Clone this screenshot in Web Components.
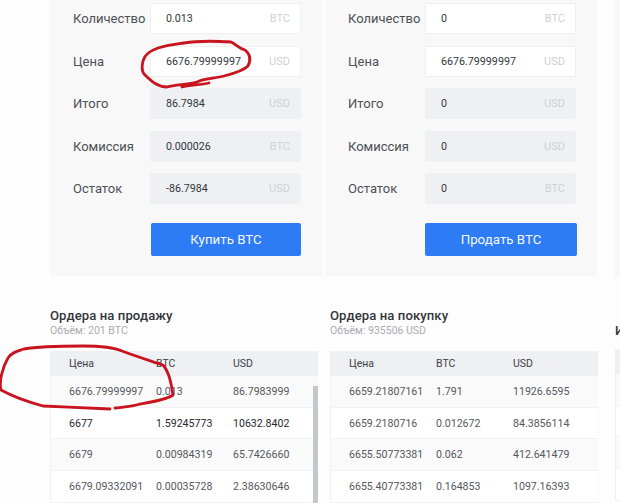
<!doctype html>
<html>
<head>
<meta charset="utf-8">
<style>
html, body { margin: 0; padding: 0; height: 503px; overflow: hidden; background: #fdfdfd; }
body { font-family: Roboto, "Liberation Sans", sans-serif; color: #3a3d42; }
</style>
</head>
<body>
<trade-page>
	<trade-form slot="forms" action="Купить BTC" class="first">
		<trade-field label="Количество" unit="BTC" value="0.013" editable></trade-field>
		<trade-field label="Цена" unit="USD" value="6676.79999997" editable></trade-field>
		<trade-field label="Итого" unit="USD" value="86.7984"></trade-field>
		<trade-field label="Комиссия" unit="BTC" value="0.000026"></trade-field>
		<trade-field label="Остаток" unit="USD" value="-86.7984"></trade-field>
	</trade-form>
	<trade-form slot="forms" action="Продать BTC">
		<trade-field label="Количество" unit="BTC" value="0" editable></trade-field>
		<trade-field label="Цена" unit="USD" value="6676.79999997" editable></trade-field>
		<trade-field label="Итого" unit="USD" value="0"></trade-field>
		<trade-field label="Комиссия" unit="USD" value="0"></trade-field>
		<trade-field label="Остаток" unit="BTC" value="0"></trade-field>
	</trade-form>
	<trade-form slot="forms" class="stub"></trade-form>

	<order-book slot="books" heading="Ордера на продажу" volume="Объём: 201 BTC" scroll>
		<order-row price="6676.79999997" btc="0.013" usd="86.7983999"></order-row>
		<order-row price="6677" btc="1.59245773" usd="10632.8402" strong></order-row>
		<order-row price="6679" btc="0.00984319" usd="65.7426660"></order-row>
		<order-row price="6679.09332091" btc="0.00035728" usd="2.38630646"></order-row>
	</order-book>
	<order-book slot="books" heading="Ордера на покупку" volume="Объём: 935506 USD">
		<order-row price="6659.21807161" btc="1.791" usd="11926.6595"></order-row>
		<order-row price="6659.2180716" btc="0.012672" usd="84.3856114"></order-row>
		<order-row price="6655.50773381" btc="0.062" usd="412.641479"></order-row>
		<order-row price="6655.40773381" btc="0.164853" usd="1097.16393"></order-row>
	</order-book>
	<order-book slot="books" class="history" heading="И" volume="" nohead>
		<order-row></order-row>
		<order-row></order-row>
		<order-row></order-row>
		<order-row></order-row>
	</order-book>
</trade-page>

<script>
class TradePage extends HTMLElement {
	constructor() {
		super();
		this.attachShadow({ mode: "open" });
		this.shadowRoot.innerHTML = `
			<style>
				:host { display: block; position: relative; width: 620px; height: 503px; overflow: hidden; }
				.forms { display: flex; gap: 3px; padding-left: 50px; width: 700px; }
				.books { display: flex; gap: 12px; padding-left: 50px; width: 800px; margin-top: 31px; }
				svg { position: absolute; left: 0; top: 0; pointer-events: none; }
				path { fill: none; stroke: #c8141e; stroke-width: 2.8; stroke-linecap: round; stroke-linejoin: round; }
			</style>
			<div class="forms"><slot name="forms"></slot></div>
			<div class="books"><slot name="books"></slot></div>
			<svg width="620" height="503" viewBox="0 0 620 503">
				<path d="M200 81 C190 85 176 84 167 87 C158 87 152 82 144 74 C141 70 142 65 143 61 C145 54 150 51 158 48 C168 45 178 44 184 43 C196 41 215 41 231 42 C236 44 238 48 245 50 C250 54 251 60 248 66 C243 71 232 74 224 76 C215 78 205 79 199 81 M209 83 C200 85 190 85 182 87"/>
				<path d="M110 409 C90 408 65 407 43 406 C28 402 12 396 1 390 C-1 382 2 368 8 358 C12 352 18 351 24 349 C40 346 60 346 83 346 C100 346 113 347 122 351 C135 356 148 360 163 365 C169 372 171 382 173 395 C166 400 152 402 140 404 C131 407 122 407 115 408"/>
			</svg>`;
	}
}
customElements.define("trade-page", TradePage);

class TradeForm extends HTMLElement {
	constructor() {
		super();
		this.attachShadow({ mode: "open" });
		const action = this.getAttribute("action");
		this.shadowRoot.innerHTML = `
			<style>
				:host { display: block; box-sizing: border-box; width: 273px; height: 276px; padding: 3px 21px 0 23px; background: #f8f8f9; }
				:host(:not(.first)) { width: 272px; padding: 3px 21px 0 23px; }
				:host(.stub) { width: 200px; margin-left: 14px; }
				.rows { display: flex; flex-direction: column; gap: 11.5px; }
				button { display: block; box-sizing: border-box; width: 150px; height: 33px; margin: 19px 0 0 78px; padding: 0; border: 0; border-radius: 2px; background: #2e7bf6; color: #f4f8ff; font: 13.3px Roboto, sans-serif; }
				:host(:not(.first)) button { width: 152px; margin-left: 77px; }
			</style>
			<div class="rows"><slot></slot></div>
			${action ? `<button>${action}</button>` : ""}`;
	}
}
customElements.define("trade-form", TradeForm);

class TradeField extends HTMLElement {
	constructor() {
		super();
		this.attachShadow({ mode: "open" });
		const editable = this.hasAttribute("editable");
		this.shadowRoot.innerHTML = `
			<style>
				:host { display: flex; align-items: center; height: 31px; font-size: 13px; }
				.label { width: 77px; flex: none; color: #4d5055; }
				.box { box-sizing: border-box; flex: none; display: flex; align-items: center; justify-content: space-between; width: 151px; height: 31px; padding: 0 11px 0 16px; border-radius: 2px;
					background: ${editable ? "#fff" : "#eef0f3"}; ${editable ? "box-shadow: 0 0 0 1px #eeeff1 inset;" : ""} }
				.value { font-size: 10.7px; color: #34373b; }
				.unit { font-size: 11px; color: #ced1d6; }
			</style>
			<span class="label">${this.getAttribute("label")}</span>
			<span class="box">
				<span class="value">${this.getAttribute("value")}</span>
				<span class="unit">${this.getAttribute("unit")}</span>
			</span>`;
	}
}
customElements.define("trade-field", TradeField);

class OrderBook extends HTMLElement {
	constructor() {
		super();
		this.attachShadow({ mode: "open" });
		const scroll = this.hasAttribute("scroll");
		const head = this.hasAttribute("nohead") ? "" : `<span>Цена</span><span>BTC</span><span>USD</span>`;
		this.shadowRoot.innerHTML = `
			<style>
				:host { display: block; position: relative; flex: none; width: 268px; }
				:host(.history) { width: 200px; margin-left: 5px; }
				h3 { margin: 0; height: 17px; font: 500 13.1px/17px Roboto, sans-serif; color: #33363b; white-space: nowrap; letter-spacing: .1px; }
				:host(.history) h3 { margin-top: 15px; height: 2px; }
				.volume { height: 13px; margin-top: 0; font-size: 10.5px; line-height: 13px; color: #a9acb1; }
				:host(.history) .volume { height: 11px; }
				.head { display: grid; grid-template-columns: 87px 77px 1fr; align-items: center; height: 25px; margin-top: 14px; padding-left: 19px; background: #eef0f3; font-size: 10.5px; color: #3f4247; }
				.bar { position: absolute; right: 0; top: 79px; width: 5px; height: 130px; background: #c6c7c9; }
			</style>
			<h3>${this.getAttribute("heading")}</h3>
			<div class="volume">${this.getAttribute("volume")}</div>
			<div class="head">${head}</div>
			<slot></slot>
			${scroll ? `<div class="bar"></div>` : ""}`;
	}
}
customElements.define("order-book", OrderBook);

class OrderRow extends HTMLElement {
	constructor() {
		super();
		this.attachShadow({ mode: "open" });
		const cell = name => `<span>${this.getAttribute(name) || ""}</span>`;
		this.shadowRoot.innerHTML = `
			<style>
				:host { box-sizing: border-box; display: grid; grid-template-columns: 87px 77px 1fr; align-items: center; height: 31.7px; padding-left: 18px; background: #fff; border: solid #f1f2f4; border-width: 0 0 1px 1px; font-size: 10.6px; color: #55585d; }
				:host(:nth-child(odd)) { background: #fafafa; }
				:host([strong]) { color: #26292d; }
			</style>
			${cell("price")}${cell("btc")}${cell("usd")}`;
	}
}
customElements.define("order-row", OrderRow);
</script>
</body>
</html>
